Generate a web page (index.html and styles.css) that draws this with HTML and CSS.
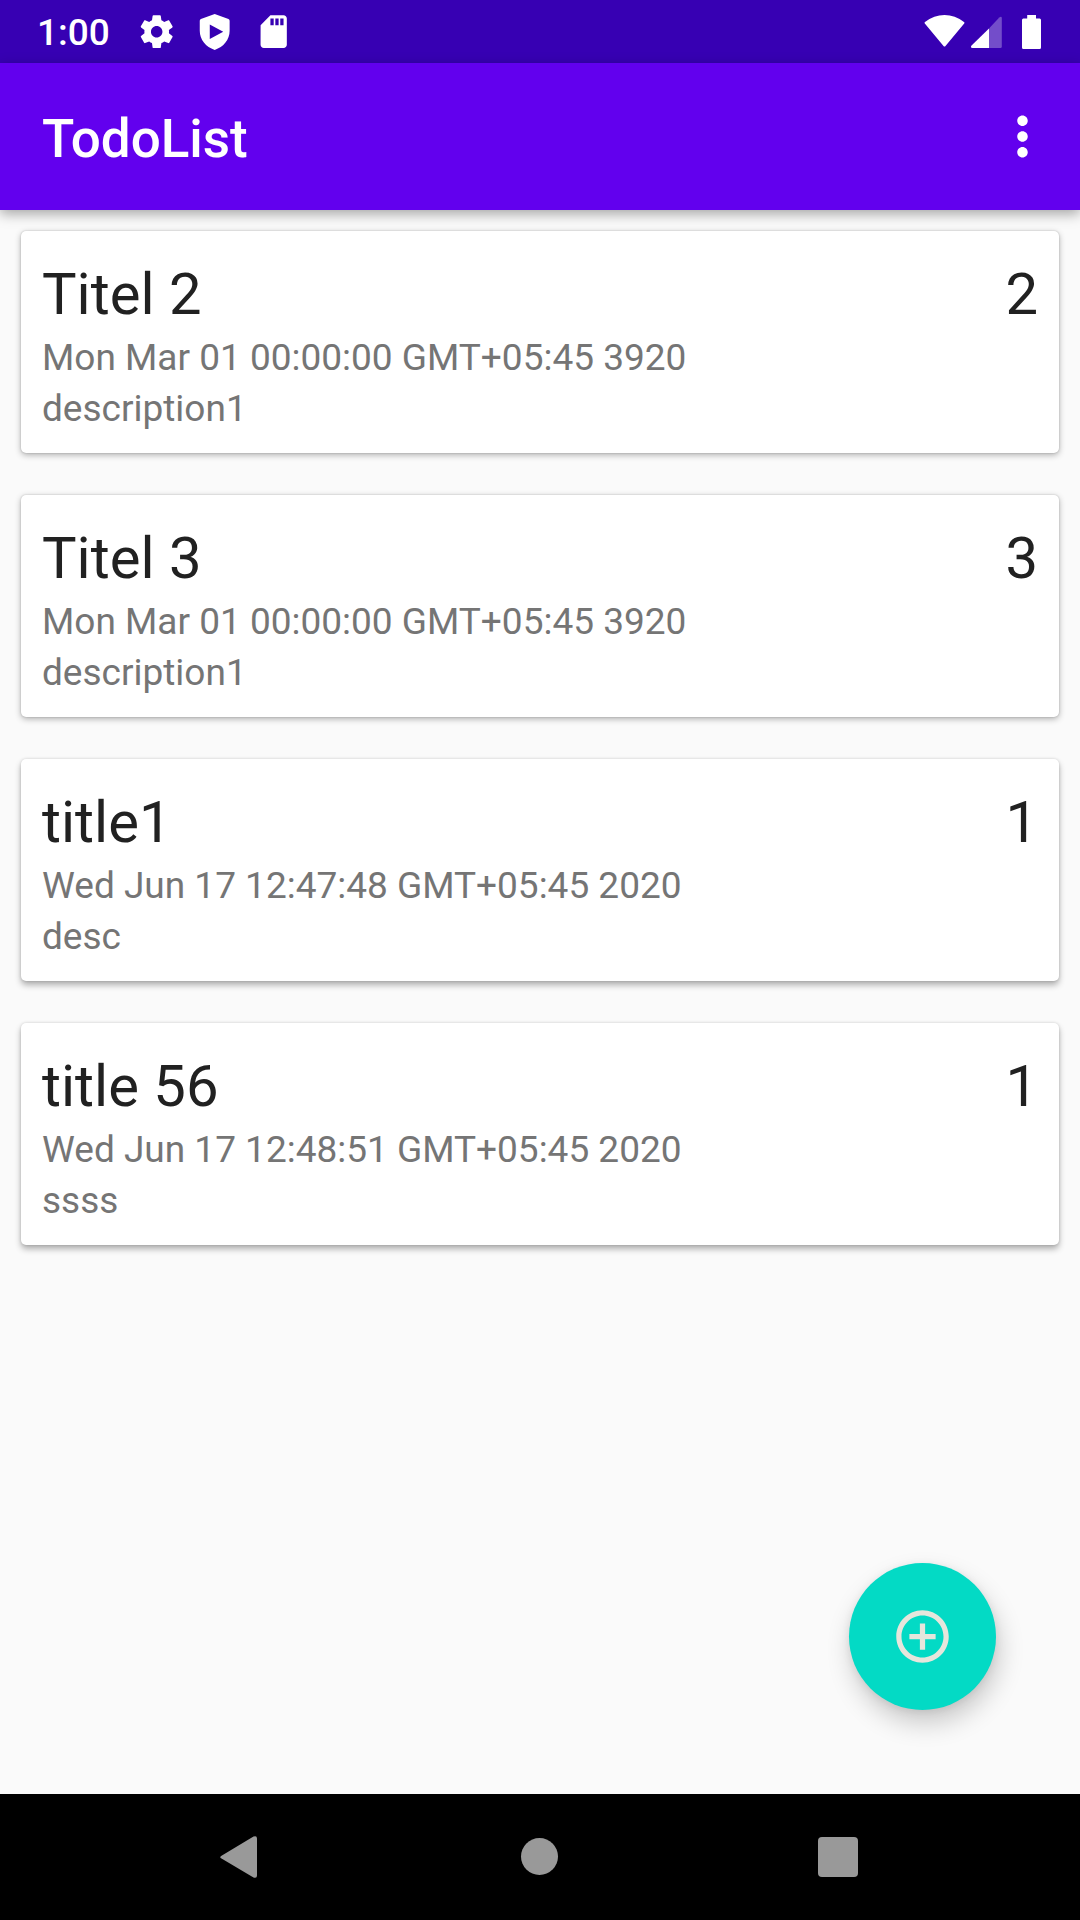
FILE: index.html
```html
<!DOCTYPE html>
<html lang="en">
<head>
<meta charset="utf-8">
<title>TodoList</title>
<link rel="stylesheet" href="styles.css">
</head>
<body>
<div class="screen">
  <header class="status-bar">
    <span class="clock">1:00</span>
    <div class="notifications">
      <svg class="notification" viewBox="0 0 24 24"><path d="M19.43 12.98c.04-.32.07-.64.07-.98s-.03-.66-.07-.98l2.11-1.65c.19-.15.24-.42.12-.64l-2-3.46c-.12-.22-.39-.3-.61-.22l-2.49 1c-.52-.4-1.08-.73-1.69-.98l-.38-2.65C14.46 2.18 14.25 2 14 2h-4c-.25 0-.46.18-.49.42l-.38 2.65c-.61.25-1.17.59-1.69.98l-2.49-1c-.23-.09-.49 0-.61.22l-2 3.46c-.13.22-.07.49.12.64l2.11 1.65c-.04.32-.07.65-.07.98s.03.66.07.98l-2.11 1.65c-.19.15-.24.42-.12.64l2 3.46c.12.22.39.3.61.22l2.49-1c.52.4 1.08.73 1.69.98l.38 2.65c.03.24.24.42.49.42h4c.25 0 .46-.18.49-.42l.38-2.65c.61-.25 1.17-.59 1.69-.98l2.49 1c.23.09.49 0 .61-.22l2-3.46c.12-.22.07-.49-.12-.64l-2.11-1.65zM12 15.5c-1.93 0-3.5-1.57-3.5-3.5s1.57-3.5 3.5-3.5 3.5 1.57 3.5 3.5-1.57 3.5-3.5 3.5z"/></svg>
      <svg class="notification" viewBox="0 0 24 24"><path fill-rule="evenodd" d="M12 1.2L3.6 4.3Q2.9 4.6 2.9 5.3V11.5C2.9 16.8 6.6 21.6 12 23.1C17.4 21.6 21.1 16.8 21.1 11.5V5.3Q21.1 4.6 20.4 4.3ZM9 7.6L17.2 12L9 16.4Z"/></svg>
      <svg class="notification" viewBox="0 0 24 24"><path d="M18 2h-8L4.02 8 4 20c0 1.1.9 2 2 2h12c1.100 0 2-.9 2-2V4c0-1.100-.9-2-2-2zm-6 6h-2V4h2v4zm3 0h-2V4h2v4zm3 0h-2V4h2v4z"/></svg>
    </div>
    <svg class="system-icons" viewBox="0 0 120 36">
      <path d="M.8 9.600Q0 8.700 1 8Q10 1 20.500 1T40 8Q41 8.700 40.200 9.600L21.500 32Q20.500 33 19.500 32Z"/>
      <path class="signal-empty" d="M65 14.500L75.300 3.600Q77.500 1.800 77.800 4V32.500Q77.800 34 76.500 34H65Z"/>
      <path d="M65 14.500V34H48.500Q46.200 34 47.300 31.800Z"/>
      <path d="M103.200 1H112V4.500H115.600Q117 4.500 117 6V33.500Q117 35 115.600 35H99.400Q98 35 98 33.500V6Q98 4.500 99.400 4.500H103.200Z"/>
    </svg>
  </header>

  <div class="app-bar">
    <h1 class="app-title">TodoList</h1>
    <svg class="more" viewBox="0 0 24 24"><path d="M12 8c1.100 0 2-.9 2-2s-.9-2-2-2-2 .9-2 2 .9 2 2 2zm0 2c-1.100 0-2 .9-2 2s.9 2 2 2 2-.9 2-2-.9-2-2-2zm0 6c-1.100 0-2 .9-2 2s.9 2 2 2 2-.9 2-2-.9-2-2-2z"/></svg>
  </div>

  <main class="list">
    <article class="card">
      <div class="card-head"><h2 class="title">Titel 2</h2><span class="priority">2</span></div>
      <p class="detail">Mon Mar 01 00:00:00 GMT+05:45 3920</p>
      <p class="detail">description1</p>
    </article>
    <article class="card">
      <div class="card-head"><h2 class="title">Titel 3</h2><span class="priority">3</span></div>
      <p class="detail">Mon Mar 01 00:00:00 GMT+05:45 3920</p>
      <p class="detail">description1</p>
    </article>
    <article class="card card-lower">
      <div class="card-head"><h2 class="title">title1</h2><span class="priority">1</span></div>
      <p class="detail">Wed Jun 17 12:47:48 GMT+05:45 2020</p>
      <p class="detail">desc</p>
    </article>
    <article class="card card-lower">
      <div class="card-head"><h2 class="title">title 56</h2><span class="priority">1</span></div>
      <p class="detail">Wed Jun 17 12:48:51 GMT+05:45 2020</p>
      <p class="detail">ssss</p>
    </article>
  </main>

  <button class="fab" aria-label="Add">
    <svg class="fab-icon" viewBox="0 0 24 24"><path d="M13 7h-2v4H7v2h4v4h2v-4h4v-2h-4V7zm-1-5C6.480 2 2 6.480 2 12s4.480 10 10 10 10-4.480 10-10S17.520 2 12 2zm0 18c-4.410 0-8-3.590-8-8s3.590-8 8-8 8 3.590 8 8-3.590 8-8 8z"/></svg>
  </button>

  <nav class="nav-bar">
    <svg class="nav-icon" viewBox="0 0 48 48"><path d="M5.500 22.700L37.500 3.500Q41 2.200 41 5.500V42.500Q41 45.800 37.500 44.500L5.500 25.600Q3 24.100 5.500 22.700Z"/></svg>
    <svg class="nav-icon" viewBox="0 0 48 48"><circle cx="24.500" cy="23.500" r="18.500"/></svg>
    <svg class="nav-icon" viewBox="0 0 48 48"><rect x="4" y="4" width="40" height="40" rx="4"/></svg>
  </nav>
</div>
</body>
</html>
```
FILE: styles.css
```css
* {
  box-sizing: border-box;
  margin: 0;
  padding: 0;
}

body {
  font-family: Roboto, "Liberation Sans", sans-serif;
}

.screen {
  position: relative;
  display: flex;
  flex-direction: column;
  width: 1080px;
  height: 1920px;
  overflow: hidden;
  background: #fafafa;
}

.status-bar {
  display: flex;
  align-items: center;
  height: 63px;
  padding: 0 36px 0 37px;
  background: #3700b3;
  color: #fff;
  fill: #fff;
}

.clock {
  width: 73px;
  padding-top: 1px;
  font-size: 37px;
  font-weight: 500;
  line-height: 43px;
}

.notifications {
  display: flex;
  gap: 19px;
  margin-left: 27px;
}

.notification {
  width: 39.4px;
  height: 39.4px;
}

.system-icons {
  width: 120px;
  height: 36px;
  margin-left: auto;
}

.signal-empty {
  fill-opacity: 0.3;
}

.app-bar {
  z-index: 1;
  display: flex;
  align-items: center;
  justify-content: space-between;
  height: 147px;
  padding: 0 26px 0 42px;
  background: #6200ee;
  box-shadow: 0 4px 12px rgba(0, 0, 0, 0.34);
  color: #fff;
  fill: #fff;
}

.app-title {
  padding-top: 4px;
  font-size: 53px;
  font-weight: 500;
  line-height: 62px;
}

.more {
  width: 63px;
  height: 63px;
}

.list {
  display: flex;
  flex: 1;
  flex-direction: column;
  gap: 42px;
  padding: 21px;
}

.card {
  height: 222px;
  padding: 26px 21px 0;
  border-radius: 5px;
  background: #fff;
  box-shadow: 0 2px 6px rgba(0, 0, 0, 0.3), 0 0 2px rgba(0, 0, 0, 0.2);
}

.card-lower {
  box-shadow: 0 4px 6px rgba(0, 0, 0, 0.3), 0 0 3px rgba(0, 0, 0, 0.15);
}

.card-head {
  display: flex;
  justify-content: space-between;
  height: 75px;
  color: #212121;
  line-height: 74px;
}

.title,
.priority {
  font-size: 58px;
  font-weight: 400;
}

.detail {
  color: #757575;
  font-size: 37px;
  line-height: 51px;
}

.fab {
  position: absolute;
  right: 84px;
  bottom: 210px;
  display: flex;
  align-items: center;
  justify-content: center;
  width: 147px;
  height: 147px;
  border: 0;
  border-radius: 50%;
  background: #03dac5;
  box-shadow: 3px 13px 26px rgba(0, 0, 0, 0.2), 0 2px 8px rgba(0, 0, 0, 0.08);
  fill: #e6e6dc;
}

.fab-icon {
  width: 63px;
  height: 63px;
}

.nav-bar {
  display: flex;
  align-items: center;
  justify-content: center;
  gap: 251px;
  height: 126px;
  padding-right: 3px;
  background: #000;
  fill: #999;
}

.nav-icon {
  width: 48px;
  height: 48px;
}
```
